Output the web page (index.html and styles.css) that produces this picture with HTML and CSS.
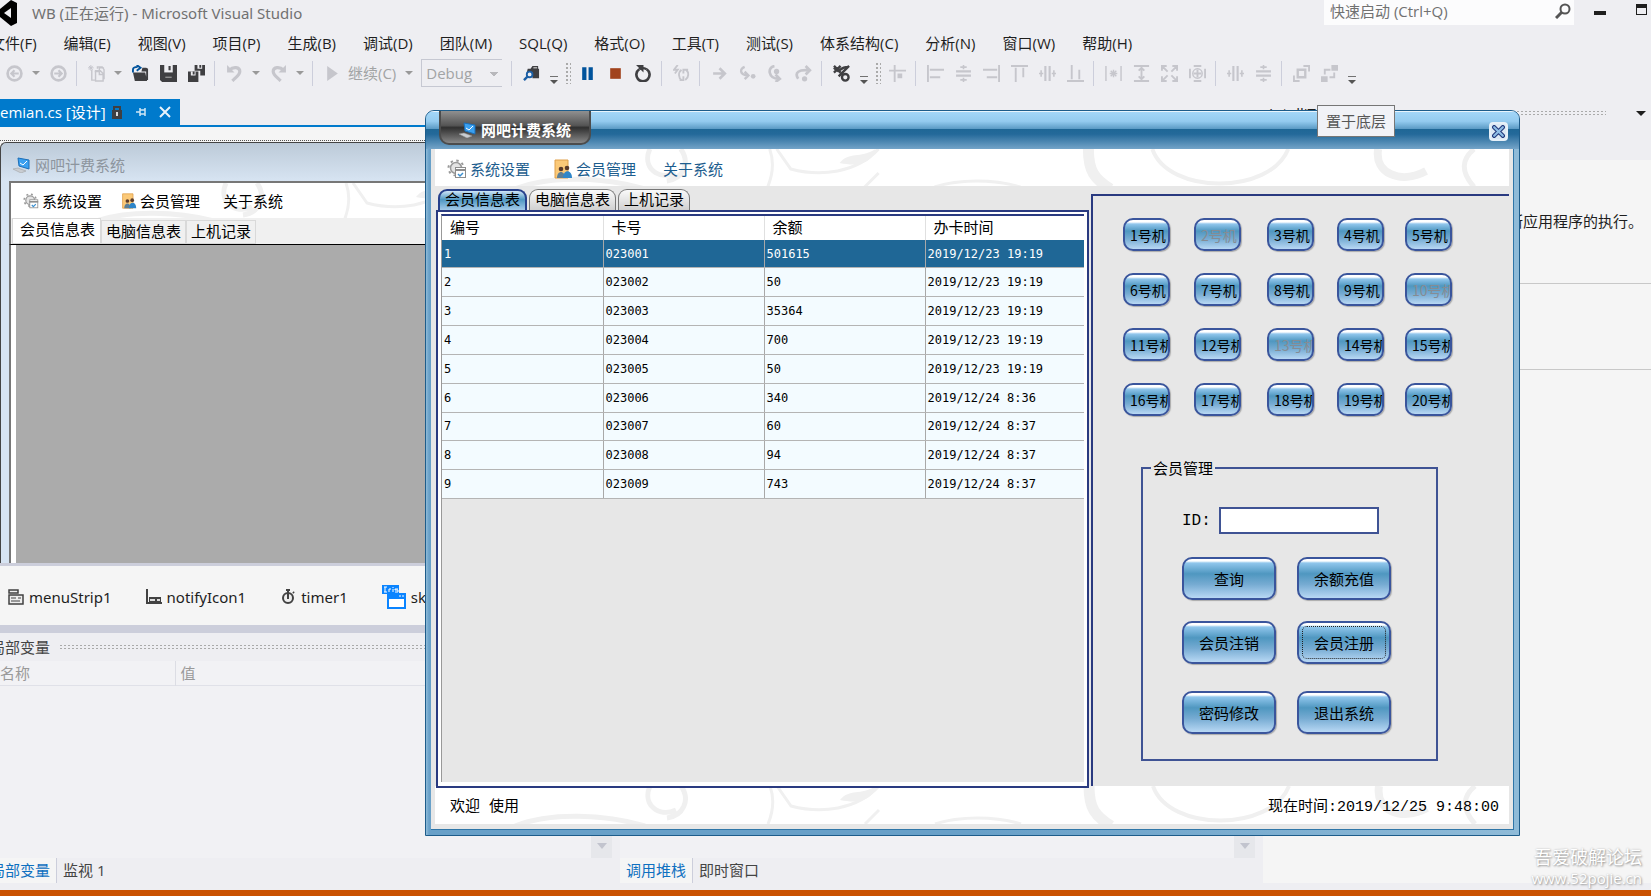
FILE: index.html
```html
<!DOCTYPE html>
<html lang="zh-CN">
<head>
    <meta charset="UTF-8">
    <meta name="viewport" content="width=device-width, initial-scale=1.0">
    <title>WB (正在运行) - Microsoft Visual Studio</title>
    <link rel="stylesheet" href="styles.css">
</head>
<body>
    <!-- shared icons -->
    <svg class="defs" aria-hidden="true">
        <symbol id="i-computer" viewBox="0 0 20 16">
            <path d="M6 1l11 2v9L7 9z" fill="#3aa0f0" stroke="#1c6fb8"/>
            <path d="M8 6l3 2 4-4" fill="none" stroke="#fff"/>
            <path d="M1 12l5-1 8 3-5 2z" fill="#c9cdd2" stroke="#999" stroke-width=".5"/>
        </symbol>
        <symbol id="i-gear" viewBox="0 0 20 20">
            <circle cx="9" cy="9" r="5.5" fill="#e4e4e4" stroke="#9a9a9a" stroke-width="1.5"/>
            <circle cx="9" cy="9" r="7.5" fill="none" stroke="#9a9a9a" stroke-width="2" stroke-dasharray="2.4 3.5"/>
            <rect x="8.500" y="8.500" width="10" height="10" fill="#fff" stroke="#8d8d8d"/>
            <path d="M8 11h11" stroke="#8d8d8d" stroke-width="2"/>
            <path d="M11 15l2 2 3-3" fill="none" stroke="#3a8fd0" stroke-width="1.5"/>
        </symbol>
        <symbol id="i-member" viewBox="0 0 18 20">
            <path d="M1 1h13v18H1z" fill="#fbc978" stroke="#e0a04b"/>
            <circle cx="7" cy="10" r="2.300" fill="#5a3b2b"/>
            <circle cx="13" cy="9" r="2.300" fill="#5a3b2b"/>
            <path d="M3 19c0-8 8-8 8 0z" fill="#5d7f96"/>
            <path d="M9 19c0-9 9-9 9 0z" fill="#2f86c9"/>
        </symbol>
        <symbol id="i-swirl" viewBox="0 0 1075 38" preserveAspectRatio="xMinYMin slice">
            <g fill="none" stroke="#f0f0f0" stroke-width="5">
                <path d="M215 0c-8 18 8 32 26 24M246 0c10 14 2 30-14 32M80 40c35-14 90-12 130 0" />
                <path d="M335 0c5 14 3 26-2 38M342 0l14 20c30 8 66 4 88-20M500 38c24-8 60-8 86 0M430 38l14-14" stroke-width="3"/>
                <path d="M654 0c0 22 6 30 22 40" stroke-width="11"/>
                <path d="M718 0c16 46 118 46 136 0" stroke-width="4"/>
                <path d="M944 0c-4 24 22 36 48 22" stroke-width="8"/>
                <path d="M1040 0c-12 10-14 22 0 38" stroke-width="5"/>
            </g>
            <path d="M405 14c10-12 20-4 36-14-4 14-16 18-36 14z" fill="#f0f0f0"/>
        </symbol>
        <symbol id="i-distribute-h" viewBox="0 0 16 16">
            <path d="M6 1v14M10 1v14" stroke="#c6c6cc" stroke-width="2"/>
            <path d="M2 5v6M14 5v6M0 8h4M12 8h4" stroke="#c6c6cc" stroke-width="1.500"/>
        </symbol>
        <symbol id="i-distribute-v" viewBox="0 0 16 16">
            <path d="M1 6h14M1 10h14" stroke="#c6c6cc" stroke-width="2"/>
            <path d="M5 2h6M5 14h6M8 0v4M8 12v4" stroke="#c6c6cc" stroke-width="1.500"/>
        </symbol>
    </svg>

    <header class="titlebar">
        <svg class="vs-logo" viewBox="0 0 18 26"><path d="M0 9L11 0l6 3v20l-6 3L0 17z" fill="#000"/><path d="M4 13l7-5v10z" fill="#eeeef2"/></svg>
        <span class="title">WB (正在运行) - Microsoft Visual Studio</span>
        <div class="quick">
            <input type="text" aria-label="快速启动" placeholder="快速启动 (Ctrl+Q)">
            <svg viewBox="0 0 16 16"><circle cx="10" cy="6" r="4.500" fill="none" stroke="#555" stroke-width="2"/><path d="M7 9l-6 6" stroke="#555" stroke-width="3"/></svg>
        </div>
        <button class="win-min" aria-label="最小化"></button>
        <button class="win-max" aria-label="最大化"></button>
    </header>

    <nav class="menubar">
        <a href="#">文件(F)</a><a href="#">编辑(E)</a><a href="#">视图(V)</a><a href="#">项目(P)</a><a href="#">生成(B)</a><a href="#">调试(D)</a><a href="#">团队(M)</a><a href="#">SQL(Q)</a><a href="#">格式(O)</a><a href="#">工具(T)</a><a href="#">测试(S)</a><a href="#">体系结构(C)</a><a href="#">分析(N)</a><a href="#">窗口(W)</a><a href="#">帮助(H)</a>
    </nav>

    <div class="toolbar">
        <button class="tool" aria-label="后退"><svg viewBox="0 0 16 16"><circle cx="8" cy="8" r="6.500" fill="none" stroke="#c6c6cc" stroke-width="2.500"/><path d="M12 8H5M8 5L5 8l3 3" fill="none" stroke="#c6c6cc" stroke-width="2"/></svg></button>
        <i class="caret"></i>
        <button class="tool" aria-label="前进"><svg viewBox="0 0 16 16"><circle cx="8" cy="8" r="6.500" fill="none" stroke="#c6c6cc" stroke-width="2.500"/><path d="M4 8h7M8 5l3 3-3 3" fill="none" stroke="#c6c6cc" stroke-width="2"/></svg></button>
        <i class="sep"></i>
        <button class="tool" aria-label="新建"><svg viewBox="0 0 18 18"><path d="M4 5v11h4M7 7h5V3h5v0M8 17V6h5l3 3v8zM12 6v4h4M10 4V2h5l2 3v10" fill="none" stroke="#c6c6cc" stroke-width="1.500"/><path d="M0 3h6M3 0v6M1 1l4 4M5 1L1 5" stroke="#c6c6cc"/></svg></button>
        <i class="caret"></i>
        <button class="tool" aria-label="打开"><svg viewBox="0 0 18 18"><path d="M1 8h13l2 9H3zM11 3h4l2 1v12h-2V7h-5z" fill="#3f3f42"/><path d="M1 8V5c0-2 2-3 5-3M5 0l4 3-4 3" fill="none" stroke="#00539c" stroke-width="2"/></svg></button>
        <button class="tool" aria-label="保存"><svg viewBox="0 0 16 16"><path d="M0 0h16v16H2l-2-2z" fill="#3f3f42"/><path d="M4 0h8v7H4z" fill="#eeeef2"/><path d="M8 1h2v4H8zM5 11h1v4H5z" fill="#3f3f42"/><path d="M5 11h6v1H5z" fill="#aaa"/></svg></button>
        <button class="tool" aria-label="全部保存"><svg viewBox="0 0 18 18"><path d="M7 0h11v11h-5V6H7zM0 7h11v11H0z" fill="#3f3f42"/><path d="M10 0h5v4h-5zM3 7h5v4H3z" fill="#eeeef2"/><path d="M12 0h2v3h-2zM5 7h2v3H5z" fill="#3f3f42"/></svg></button>
        <i class="sep"></i>
        <button class="tool" aria-label="撤消"><svg viewBox="0 0 16 16"><path d="M3 5c4-4 10-3 10 1 0 3-3 5-7 9" fill="none" stroke="#c6c6cc" stroke-width="3"/><path d="M1 0v7h7z" fill="#c6c6cc"/></svg></button>
        <i class="caret"></i>
        <button class="tool" aria-label="重做"><svg viewBox="0 0 16 16"><path d="M13 5C9 1 3 2 3 6c0 3 3 5 7 9" fill="none" stroke="#c6c6cc" stroke-width="3"/><path d="M15 0v7H8z" fill="#c6c6cc"/></svg></button>
        <i class="caret"></i>
        <i class="sep"></i>
        <button class="tool" aria-label="运行"><svg viewBox="0 0 16 16"><path d="M3 1l10 7-10 7z" fill="#c6c6cc"/></svg></button>
        <button class="continue">继续(C)</button>
        <i class="caret"></i>
        <select class="config" aria-label="解决方案配置"><option>Debug</option></select>
        <i class="sep"></i>
        <button class="tool" aria-label="查找"><svg viewBox="0 0 18 18"><path d="M5 4h3l2-3h6v3h1v10h-7V8H4z" fill="#3f3f42"/><path d="M11 3h4" stroke="#eee"/><circle cx="7" cy="10" r="3" fill="#eeeef2" stroke="#1b5fa6" stroke-width="2"/><path d="M5 12l-4 4" stroke="#1b5fa6" stroke-width="2.500"/></svg></button>
        <i class="more"></i>
        <i class="grip"></i>
        <button class="tool" aria-label="暂停"><svg viewBox="0 0 16 16"><path d="M3 2h4v12H3zM9 2h4v12H9z" fill="#00539c"/></svg></button>
        <button class="tool" aria-label="停止"><svg viewBox="0 0 16 16"><path d="M3 3h10v10H3z" fill="#a1421c"/></svg></button>
        <button class="tool" aria-label="重新启动"><svg viewBox="0 0 16 16"><path d="M4 4a6.200 6.200 0 1 0 7 0" fill="none" stroke="#3f3f42" stroke-width="2.500"/><path d="M1 0h7v7z" fill="#3f3f42"/><path d="M4 4c3-2 5-1 7 0" fill="none" stroke="#3f3f42" stroke-width="2"/></svg></button>
        <i class="sep"></i>
        <button class="tool" aria-label="应用代码更改"><svg viewBox="0 0 18 18"><path d="M5 0L1 5h4L2 9" fill="none" stroke="#c6c6cc" stroke-width="2"/><path d="M9 5c-4 3-3 9 0 11M7 16h4v-4M13 16c4-3 4-8 1-11M16 5h-5v4" fill="none" stroke="#c6c6cc" stroke-width="2"/></svg></button>
        <i class="sep"></i>
        <button class="tool" aria-label="显示下一语句"><svg viewBox="0 0 16 16"><path d="M2 8h10M8 3l5 5-5 5" fill="none" stroke="#c6c6cc" stroke-width="2.500"/></svg></button>
        <button class="tool" aria-label="逐语句"><svg viewBox="0 0 18 16"><path d="M6 1C1 3 0 9 9 10M6 6l4 4-4 4" fill="none" stroke="#c6c6cc" stroke-width="2.500"/><circle cx="15" cy="11" r="2.500" fill="#c6c6cc"/></svg></button>
        <button class="tool" aria-label="逐过程"><svg viewBox="0 0 16 16"><path d="M7 1C0 2 1 13 11 13M8 9l4 4-4 3" fill="none" stroke="#c6c6cc" stroke-width="2.500"/><circle cx="9" cy="6" r="2.500" fill="#c6c6cc"/></svg></button>
        <button class="tool" aria-label="跳出"><svg viewBox="0 0 16 16"><path d="M3 13C-1 7 4 4 13 5M10 1l4 4-4 4" fill="none" stroke="#c6c6cc" stroke-width="2.500"/><circle cx="9" cy="13" r="2.500" fill="#c6c6cc"/></svg></button>
        <i class="sep"></i>
        <button class="tool" aria-label="十六进制显示"><svg viewBox="0 0 18 18"><path d="M1 1l7 7M8 1L1 8M1 3c7 8 4-1 15-1M17 1L6 12" fill="none" stroke="#3f3f42" stroke-width="2.500"/><circle cx="13" cy="13" r="3.500" fill="none" stroke="#3f3f42" stroke-width="2.500"/></svg></button>
        <i class="more"></i>
        <i class="grip"></i>
        <button class="tool" aria-label="对齐到网格"><svg viewBox="0 0 18 18"><path d="M0 6h18M6 0v18" stroke="#c6c6cc" stroke-width="2"/><path d="M9 9h5v5H9z" fill="#c6c6cc"/></svg></button>
        <i class="sep"></i>
        <button class="tool" aria-label="左对齐"><svg viewBox="0 0 18 18"><path d="M1 0v18M3 5h15M3 13h11" stroke="#c6c6cc" stroke-width="2"/></svg></button>
        <button class="tool" aria-label="居中对齐"><svg><use href="#i-distribute-v"/></svg></button>
        <button class="tool" aria-label="右对齐"><svg viewBox="0 0 18 18"><path d="M17 0v18M0 5h15M4 13h11" stroke="#c6c6cc" stroke-width="2"/></svg></button>
        <button class="tool" aria-label="顶端对齐"><svg viewBox="0 0 18 18"><path d="M0 1h18M5 3v15M13 3v10" stroke="#c6c6cc" stroke-width="2"/></svg></button>
        <button class="tool" aria-label="中间对齐"><svg><use href="#i-distribute-h"/></svg></button>
        <button class="tool" aria-label="底端对齐"><svg viewBox="0 0 18 18"><path d="M0 17h18M5 0v15M13 5v10" stroke="#c6c6cc" stroke-width="2"/></svg></button>
        <i class="sep"></i>
        <button class="tool" aria-label="相同宽度"><svg viewBox="0 0 18 18"><path d="M1 1v16M17 1v16M5 9h8M9 5v8M6 6l6 6M12 6l-6 6" stroke="#c6c6cc" stroke-width="1.500"/></svg></button>
        <button class="tool" aria-label="相同高度"><svg viewBox="0 0 18 18"><path d="M1 1h16M1 17h16M9 3v12M6 6l3-3 3 3M6 12l3 3 3-3" fill="none" stroke="#c6c6cc" stroke-width="2"/></svg></button>
        <button class="tool" aria-label="相同大小"><svg viewBox="0 0 18 18"><path d="M1 6V1h5M12 1h5v5M17 12v5h-5M6 17H1v-5M2 2l5 5M16 2l-5 5M2 16l5-5M16 16l-5-5" fill="none" stroke="#c6c6cc" stroke-width="2"/></svg></button>
        <button class="tool" aria-label="按网格调整大小"><svg viewBox="0 0 18 18"><path d="M1 4v10M17 4v10M5 1h8M5 17h8M9 5v8M5 9h8" stroke="#c6c6cc" stroke-width="2"/><circle cx="9" cy="9" r="5" fill="none" stroke="#c6c6cc" stroke-width="1.500"/></svg></button>
        <i class="sep"></i>
        <button class="tool" aria-label="水平间距"><svg><use href="#i-distribute-h"/></svg></button>
        <button class="tool" aria-label="垂直间距"><svg><use href="#i-distribute-v"/></svg></button>
        <i class="sep"></i>
        <button class="tool" aria-label="置于顶层"><svg viewBox="0 0 18 18"><path d="M5 5h8v8H5z" fill="none" stroke="#c6c6cc" stroke-width="2.500"/><path d="M11 1h6v6M1 11v6h6" fill="none" stroke="#c6c6cc" stroke-width="2"/></svg></button>
        <button class="tool" aria-label="置于底层"><svg viewBox="0 0 18 18"><path d="M11 0h7v6h-7zM0 12h7v6H0z" fill="#c6c6cc"/><path d="M4 10V5h6M14 8v5H9" fill="none" stroke="#c6c6cc" stroke-width="2"/></svg></button>
        <i class="more"></i>
    </div>

    <main class="workspace">
        <div class="left">
            <div class="doc-tabs">
                <div class="doc-tab">
                    <span>emian.cs [设计]</span>
                    <svg viewBox="0 0 12 14"><path d="M3 6V2h6v4" fill="none" stroke="#3f3f42" stroke-width="2"/><path d="M1 5h10v9H1z" fill="#3f3f42"/><path d="M5 7h2v4H5z" fill="#ddd"/></svg>
                    <svg viewBox="0 0 12 14"><path d="M1 7h4M5 3v8M5 5h5v4H5M10 3v8" fill="none" stroke="#d0e6f5" stroke-width="1.500"/></svg>
                    <svg viewBox="0 0 12 14"><path d="M1 2l10 10M11 2L1 12" stroke="#e8f3fb" stroke-width="2"/></svg>
                </div>
            </div>
            <div class="designer">
                <div class="form-frame">
                    <div class="form-title"><svg><use href="#i-computer"/></svg>网吧计费系统</div>
                    <div class="form-body">
                        <div class="form-menu">
                            <svg class="swirl"><use href="#i-swirl"/></svg>
                            <a href="#"><svg><use href="#i-gear"/></svg>系统设置</a>
                            <a href="#"><svg><use href="#i-member"/></svg>会员管理</a>
                            <a href="#">关于系统</a>
                        </div>
                        <div class="form-tabs"><button class="on">会员信息表</button><button>电脑信息表</button><button>上机记录</button></div>
                        <div class="form-grid"></div>
                    </div>
                </div>
            </div>
            <div class="tray">
                <span><svg viewBox="0 0 16 16"><path d="M1 1h9v3H1zM1 6h14v9H1z" fill="#eee" stroke="#424242" stroke-width="1.500"/><path d="M3 9h5M3 12h9M10 9h3" stroke="#424242"/></svg>menuStrip1</span>
                <span><svg viewBox="0 0 16 16"><path d="M1 0v14h15" fill="none" stroke="#424242" stroke-width="2"/><path d="M3 8h12v5H3z" fill="#424242"/><path d="M4 10h5v2H4zM11 10h3v2h-3z" fill="#ddd"/></svg>notifyIcon1</span>
                <span><svg viewBox="0 0 16 16"><circle cx="8" cy="9" r="5" fill="#eee" stroke="#424242" stroke-width="2"/><path d="M6 1h4M8 1v9M13 3l1 1" stroke="#424242" stroke-width="2"/></svg>timer1</span>
                <span class="skin"><svg viewBox="0 0 24 24"><path d="M0 0h17v9H0zM5 8h19v16H5z" fill="#0a84ff"/><path d="M7 14h15v8H7z" fill="#fff"/><path d="M17 11h2M20 11h2M2 2h3M3 2v5M2 7h3M7 7V4h2M11 4v3M11 2v1M16 4h-3v1h3v2h-3" fill="none" stroke="#fff"/></svg>skinEngine1</span>
            </div>
            <div class="panes">
                <section class="pane locals">
                    <h2><span>局部变量</span><i class="dots"></i></h2>
                    <table class="vars"><tr><th>名称</th><th>值</th></tr></table>
                    <div class="pane-body"><i class="scroll-down"></i></div>
                    <div class="pane-tabs"><button class="on">局部变量</button><button>监视 1</button></div>
                </section>
                <section class="pane stack">
                    <div class="pane-body"><i class="scroll-down"></i></div>
                    <div class="pane-tabs"><button class="on">调用堆栈</button><button>即时窗口</button></div>
                </section>
            </div>
        </div>
        <aside class="right">
            <h2><span>IntelliTrace</span><i class="dots"></i><i class="drop"></i></h2>
            <p>中断应用程序的执行。</p>
            <div class="rule"></div>
            <div class="rule"></div>
        </aside>
    </main>
    <footer class="ide-status"></footer>

    <!-- running program -->
    <div class="app">
        <div class="app-title">
            <div class="app-name"><svg><use href="#i-computer"/></svg>网吧计费系统</div>
            <button class="app-close" aria-label="关闭"><svg viewBox="0 0 12 12"><path d="M2 2l8 8M10 2l-8 8" stroke="#22397c" stroke-width="4" stroke-linecap="round"/><path d="M2 2l8 8M10 2l-8 8" stroke="#8fbfe6" stroke-width="2" stroke-linecap="round"/></svg></button>
        </div>
        <div class="app-body">
            <nav class="app-menu">
                <svg class="swirl"><use href="#i-swirl"/></svg>
                <a href="#"><svg><use href="#i-gear"/></svg>系统设置</a>
                <a href="#"><svg><use href="#i-member"/></svg>会员管理</a>
                <a href="#">关于系统</a>
            </nav>
            <div class="app-main">
                <div class="records">
                    <div class="app-tabs"><button class="on">会员信息表</button><button>电脑信息表</button><button>上机记录</button></div>
                    <div class="grid-box">
                        <div class="grid-inner">
                        <table class="grid">
                            <colgroup><col class="c1"><col class="c1"><col class="c1"><col></colgroup>
                            <thead><tr><th>编号</th><th>卡号</th><th>余额</th><th>办卡时间</th></tr></thead>
                            <tbody>
                                <tr class="sel"><td>1</td><td>023001</td><td>501615</td><td>2019/12/23 19:19</td></tr>
                                <tr><td>2</td><td>023002</td><td>50</td><td>2019/12/23 19:19</td></tr>
                                <tr><td>3</td><td>023003</td><td>35364</td><td>2019/12/23 19:19</td></tr>
                                <tr><td>4</td><td>023004</td><td>700</td><td>2019/12/23 19:19</td></tr>
                                <tr><td>5</td><td>023005</td><td>50</td><td>2019/12/23 19:19</td></tr>
                                <tr><td>6</td><td>023006</td><td>340</td><td>2019/12/24 8:36</td></tr>
                                <tr><td>7</td><td>023007</td><td>60</td><td>2019/12/24 8:37</td></tr>
                                <tr><td>8</td><td>023008</td><td>94</td><td>2019/12/24 8:37</td></tr>
                                <tr><td>9</td><td>023009</td><td>743</td><td>2019/12/24 8:37</td></tr>
                            </tbody>
                        </table>
                        </div>
                    </div>
                </div>
                <div class="machines">
                    <div class="pc-grid">
                        <button>1号机</button><button disabled>2号机</button><button>3号机</button><button>4号机</button><button>5号机</button>
                        <button>6号机</button><button>7号机</button><button>8号机</button><button>9号机</button><button disabled>10号机</button>
                        <button>11号机</button><button>12号机</button><button disabled>13号机</button><button>14号机</button><button>15号机</button>
                        <button>16号机</button><button>17号机</button><button>18号机</button><button>19号机</button><button>20号机</button>
                    </div>
                    <fieldset>
                        <legend>会员管理</legend>
                        <div class="id-row"><label for="member-id">ID:</label><input type="text" id="member-id"></div>
                        <div class="actions">
                            <button>查询</button><button>余额充值</button>
                            <button>会员注销</button><button class="focused">会员注册</button>
                            <button>密码修改</button><button>退出系统</button>
                        </div>
                    </fieldset>
                </div>
            </div>
            <div class="app-status">
                <svg class="swirl"><use href="#i-swirl"/></svg>
                <span>欢迎 使用</span>
                <span>现在时间:2019/12/25 9:48:00</span>
            </div>
        </div>
    </div>

    <div class="tooltip">置于底层</div>
    <div class="watermark">吾爱破解论坛<br><span>www.52pojie.cn</span></div>
</body>
</html>
```
FILE: styles.css
```css
* {
    box-sizing: border-box;
}

body {
    margin: 0;
    height: 100vh;
    display: flex;
    flex-direction: column;
    position: relative;
    overflow: hidden;
    background: #eeeef2;
    color: #1e1e1e;
    font-family: "Open Sans", "Noto Sans CJK SC", sans-serif;
    font-size: 15px;
    line-height: 20px;
}

button, input, select {
    font: inherit;
    color: inherit;
    margin: 0;
    padding: 0;
    border: 0;
    background: none;
}

a {
    color: inherit;
    text-decoration: none;
}

h2 {
    margin: 0;
    font-size: 15px;
    font-weight: normal;
}

svg {
    flex: none;
}

.defs {
    position: absolute;
    width: 0;
    height: 0;
}

/* title bar */
.titlebar {
    flex: none;
    height: 28px;
    display: flex;
    align-items: flex-start;
}

.vs-logo {
    width: 18px;
    height: 26px;
}

.title {
    margin-left: 14px;
    line-height: 27px;
    color: #717171;
    font-family: "Noto Sans", "Noto Sans CJK SC", sans-serif;
}

.quick {
    margin-left: auto;
    width: 250px;
    height: 25px;
    background: #fcfcfd;
    display: flex;
    align-items: center;
    padding: 0 3px 3px 6px;
}

.quick input {
    flex: 1;
    min-width: 0;
}

.quick input::placeholder {
    color: #717171;
    opacity: 1;
}

.quick svg {
    width: 16px;
    height: 16px;
}

.win-min {
    width: 12px;
    height: 4px;
    margin: 11px 0 0 20px;
    background: #1e1e1e;
}

.win-max {
    width: 11px;
    height: 11px;
    margin: 4px 4px 0 30px;
    border: 1px solid #1e1e1e;
    border-top-width: 4px;
}

/* menu */
.menubar {
    flex: none;
    height: 30px;
    display: flex;
    align-items: center;
    gap: 27px;
    margin-left: -10px;
    white-space: nowrap;
}

/* toolbar */
.toolbar {
    flex: none;
    height: 30px;
    display: flex;
    align-items: center;
}

.tool {
    width: 28px;
    height: 28px;
    flex: none;
    display: flex;
    align-items: center;
    justify-content: center;
}

.tool svg {
    width: 17px;
    height: 17px;
}

.caret {
    width: 16px;
    flex: none;
    display: flex;
    justify-content: center;
}

.caret::before {
    content: "";
    border: 4px solid transparent;
    border-top-color: #999;
    border-bottom: 0;
}

.sep {
    width: 1px;
    height: 25px;
    margin: 0 5px 0 4px;
    flex: none;
    background: #cccedb;
}

.more {
    width: 18px;
    flex: none;
    display: flex;
    flex-direction: column;
    align-items: center;
    gap: 3px;
    padding-top: 14px;
}

.more::before {
    content: "";
    width: 8px;
    height: 1px;
    background: #717171;
}

.more::after {
    content: "";
    border: 4px solid transparent;
    border-top-color: #555;
    border-bottom: 0;
}

.grip {
    width: 6px;
    height: 22px;
    margin: 0 2px;
    flex: none;
    background: radial-gradient(circle, #aaa 1px, transparent 1px) 0 0 / 4px 4px;
}

.continue {
    margin-left: 2px;
    padding-right: 5px;
    color: #a2a4a5;
    white-space: nowrap;
}

.config {
    width: 81px;
    height: 28px;
    margin: 0 5px 0 4px;
    padding: 0 4px;
    appearance: none;
    border: 1px solid #c6c8d2;
    border-right: 0;
    color: #a2a4a5;
    background: linear-gradient(45deg, transparent 50%, #b8b8bc 50%) 68px 12px / 4px 4px no-repeat, linear-gradient(-45deg, transparent 50%, #b8b8bc 50%) 72px 12px / 4px 4px no-repeat;
}

/* workspace */
.workspace {
    flex: 1;
    min-height: 0;
    display: flex;
    gap: 8px;
    padding: 11px 0 7px;
}

.left {
    flex: 1;
    min-width: 0;
    display: flex;
    flex-direction: column;
}

.doc-tabs {
    flex: none;
    height: 28px;
    border-bottom: 2px solid #007acc;
}

.doc-tab {
    width: 180px;
    height: 26px;
    display: flex;
    align-items: center;
    gap: 12px;
    background: #007acc;
    color: #fff;
    line-height: 26px;
    white-space: nowrap;
}

.doc-tab span {
    width: 99px;
}

.doc-tab svg {
    width: 12px;
    height: 14px;
}

.designer {
    flex: 1;
    min-height: 0;
    padding-top: 13px;
    background: #f5f5f5;
}

.form-frame {
    height: 100%;
    display: flex;
    flex-direction: column;
    border-top: 1px dotted #555;
}

.form-title {
    flex: none;
    height: 39px;
    margin-top: 1px;
    display: flex;
    align-items: center;
    gap: 3px;
    padding: 5px 0 0 11px;
    border: 1px solid #444;
    border-width: 1px 0 0 1px;
    border-radius: 6px 0 0 0;
    background: linear-gradient(#bccad8, #d7e4f2);
    color: #8d959e;
}

.form-title svg {
    width: 20px;
    height: 16px;
}

.form-body {
    flex: 1;
    min-height: 0;
    display: flex;
    flex-direction: column;
    border-left: 1px solid #444;
    padding-left: 8px;
    background: #d7e4f2;
}

.form-menu {
    position: relative;
    flex: none;
    height: 37px;
    display: flex;
    align-items: center;
    padding-left: 12px;
    background: #fff;
    border-left: 2px solid #777;
    border-top: 2px solid #777;
    color: #000;
}

.form-menu a, .app-menu a {
    position: relative;
    display: flex;
    align-items: center;
    gap: 3px;
    margin-right: 19px;
}

.form-menu a:last-child, .app-menu a:last-child {
    padding-left: 4px;
}

.form-menu a svg {
    width: 16px;
    height: 16px;
}

.swirl {
    position: absolute;
    inset: 0;
    width: 100%;
    height: 100%;
}

.form-menu .swirl {
    width: 1075px;
}

.form-tabs {
    flex: none;
    height: 26px;
    display: flex;
    align-items: flex-end;
    padding-left: 1px;
    background: #f0f0f0;
    border-left: 2px solid #777;
    color: #000;
}

.form-tabs button {
    height: 24px;
    padding: 0 4px 2px;
    border: 1px solid #d9d9d9;
    background: #f0f0f0;
}

.form-tabs .on {
    height: 26px;
    padding: 0 5px 4px 7px;
    background: #fff;
}

.form-grid {
    flex: 1;
    border-left: 2px solid #777;
    border-top: 1px solid #000;
    background: linear-gradient(90deg, #fff 5px, #ababab 5px);
}

/* component tray */
.tray {
    flex: none;
    height: 70px;
    display: flex;
    align-items: center;
    gap: 34px;
    padding: 2px 0 0 8px;
    border-top: 3px solid #cccedb;
    border-bottom: 8px solid #cccedb;
    background: #f5f5f5;
    font-family: "Noto Sans", sans-serif;
}

.tray span {
    display: flex;
    align-items: center;
    gap: 5px;
}

.tray span svg {
    width: 16px;
    height: 16px;
}

.tray .skin svg {
    width: 24px;
    height: 24px;
}

/* bottom panes */
.panes {
    flex: none;
    height: 250px;
    display: flex;
    gap: 8px;
}

.pane {
    flex: 1;
    display: flex;
    flex-direction: column;
    white-space: nowrap;
}

.locals {
    flex: 0 0 612px;
}

.pane h2 {
    height: 28px;
    display: flex;
    align-items: center;
    gap: 9px;
    color: #444;
}

.pane h2 span {
    margin-left: -10px;
}

.dots {
    flex: 1;
    height: 6px;
    background: radial-gradient(circle, #aaa 1px, transparent 1px) 0 0 / 4px 3px;
}

.vars {
    width: 100%;
    height: 25px;
    border-collapse: collapse;
    border-bottom: 1px solid #e0e1e8;
    background: #f2f2f5;
}

.vars th {
    padding: 0 0 0 5px;
    text-align: left;
    font-weight: normal;
    color: #999;
}

.vars th:first-child {
    width: 175px;
    padding: 0;
    border-right: 1px solid #dcdde4;
}

.pane-body {
    flex: 1;
    display: flex;
    justify-content: flex-end;
    align-items: flex-end;
    background: #f1f1f4;
}

.scroll-down {
    width: 21px;
    height: 24px;
    display: flex;
    justify-content: center;
    align-items: center;
    background: #e6e7eb;
}

.scroll-down::before {
    content: "";
    border: 5px solid transparent;
    border-top: 6px solid #c2c4ce;
    border-bottom: 0;
}

.pane-tabs {
    flex: none;
    height: 25px;
    display: flex;
}

.pane-tabs button {
    padding: 0 6px 2px;
    color: #444;
}

.pane-tabs .on {
    color: #0e70c0;
    background: #f5f5f5;
    border-right: 1px solid #cccedb;
}

.locals .on {
    margin-left: -16px;
}

/* right dock */
.right {
    flex: 0 0 388px;
    background: #f5f5f5;
}

.right h2 {
    height: 61px;
    display: flex;
    align-items: flex-start;
    gap: 10px;
    padding: 4px 5px 0 6px;
    background: #eeeef2;
}

.right h2 .dots {
    margin: 7px 0 0;
}

.drop {
    margin: 8px 0 0 20px;
    border: 5px solid transparent;
    border-top-color: #1e1e1e;
    border-bottom: 0;
}

.right p {
    margin: 0;
    padding: 51px 8px 0;
    height: 123px;
    text-align: right;
}

.rule {
    height: 86px;
    border-top: 1px solid #c8c8c8;
}

.ide-status {
    flex: none;
    height: 6px;
    background: #ca5100;
}

/* running window */
.app {
    position: absolute;
    left: 425px;
    right: 131px;
    top: 110px;
    bottom: 60px;
    display: flex;
    flex-direction: column;
    border: 1px solid #1d5c8a;
    border-radius: 9px 9px 0 0;
    background: linear-gradient(90deg, #8fbbd8, #68a0c8 3px, #68a0c8 50%, #8fbbd8);
    color: #000;
    overflow: hidden;
}

.app-title {
    flex: none;
    height: 38px;
    display: flex;
    justify-content: space-between;
    align-items: flex-start;
    padding: 0 11px 0 13px;
    border-top: 1px solid #e8f4fc;
    background: linear-gradient(#a3d6f8, #94cbef 25%, #5c9cc6 45%, #1f6796 47%, #24699a 60%, #74a4c8);
}

.app-name {
    height: 34px;
    width: 152px;
    margin-top: -1px;
    display: flex;
    align-items: center;
    gap: 3px;
    padding: 6px 0 0 17px;
    border: 2px solid #4c4c4c;
    border-top: 0;
    border-radius: 0 0 10px 10px;
    background: linear-gradient(#909090, #555 45%, #303030 52%, #888);
    color: #fff;
    font-weight: bold;
    white-space: nowrap;
}

.app-name svg {
    width: 20px;
    height: 16px;
}

.app-close {
    width: 19px;
    height: 19px;
    margin-top: 10px;
    display: flex;
    align-items: center;
    justify-content: center;
    border: 2px solid #e6f0f8;
    border-radius: 4px;
    background: #dce9f4;
}

.app-close svg {
    width: 13px;
    height: 13px;
}

.app-body {
    flex: 1;
    min-height: 0;
    margin: 0 5px 5px;
    padding: 0 4px 5px;
    display: flex;
    flex-direction: column;
    background: #e7e7e7;
    border-right: 1px solid #2f76a8;
    border-bottom: 1px solid #2f76a8;
}

.app-menu {
    position: relative;
    flex: none;
    height: 37px;
    display: flex;
    align-items: center;
    padding: 3px 0 0 12px;
    background: #fff;
    color: #1c5d8e;
}

.app-menu a {
    margin-right: 23px;
}

.app-menu a svg {
    width: 20px;
    height: 20px;
}

.app-main {
    flex: 1;
    min-height: 0;
    display: flex;
    gap: 2px;
}

/* the list box reaches over the top edge of the status strip */
.records {
    position: relative;
    z-index: 1;
    width: 653px;
    margin: 0 0 -2px 1px;
    display: flex;
    flex-direction: column;
}

.app-tabs {
    flex: none;
    height: 24px;
    display: flex;
    align-items: flex-end;
    gap: 2px;
    padding-left: 2px;
}

.app-tabs button {
    height: 21px;
    padding: 0 5px 2px;
    line-height: 17px;
    border: 1px solid #777;
    border-bottom: 0;
    border-radius: 9px 9px 0 0;
    background: linear-gradient(#fafafa, #d0d0d0);
}

.app-tabs .on {
    border: 2px solid #27408b;
    border-bottom: 0;
    background: linear-gradient(#cfe6f8, #4f97c2 45%, #a4cbea);
}

.grid-box {
    flex: 1;
    min-height: 0;
    padding: 2px 3px 4px;
    border: 2px solid #2a3a80;
    background: #fff;
}

.grid-inner {
    height: 100%;
    border-top: 2px solid #2a3a80;
    border-left: 1px solid #999;
    background: #e7e7e7;
}

.grid {
    width: 100%;
    height: 283px;
    table-layout: fixed;
    border-collapse: collapse;
    font-family: "DejaVu Sans Mono", "Noto Sans CJK SC", monospace;
    font-size: 12px;
}

.c1 {
    width: 161px;
}

.grid th {
    height: 24px;
    padding: 0 8px 3px;
    text-align: left;
    font: 15px/20px "Noto Sans CJK SC", sans-serif;
    background: #fff;
    border-right: 1px solid #e0e0e0;
}

.grid td {
    padding: 0 2px;
    line-height: 16px;
    background: #f3fbff;
    border-right: 1px solid #a8a8a8;
    border-bottom: 1px solid #b4b4b4;
}

.grid th:last-child, .grid td:last-child {
    border-right: 0;
}

.grid .sel td {
    background: #1f6796;
    color: #fff;
}

.machines {
    flex: 1;
    margin-top: 8px;
    padding: 22px 0 0 30px;
    border-top: 2px solid #2a3a80;
    border-left: 2px solid #2a3a80;
}

.pc-grid {
    display: grid;
    grid-template-columns: 71px 73px 70px 68px 47px;
    grid-auto-rows: 33px;
    row-gap: 22px;
}

.pc-grid button, .actions button {
    border: 2px solid #3a559c;
    border-radius: 10px;
    background: linear-gradient(#fff 2px, #90c6ec 4px, #4f97c0 38%, #76abd2 65%, #b8d8f4);
    box-shadow: 1px 1px 1px #aaa;
    white-space: nowrap;
    font-family: "Noto Sans CJK SC", sans-serif;
}

.pc-grid button {
    width: 47px;
    padding-left: 5px;
    text-align: left;
    overflow: hidden;
    font-size: 14px;
}

.pc-grid button:disabled {
    color: #858c94;
}

fieldset {
    width: 297px;
    height: 302px;
    margin: 43px 0 0 18px;
    padding: 0 0 0 39px;
    border: 2px solid #3f5394;
}

legend {
    margin-left: -31px;
    padding: 0 2px;
    line-height: 18px;
}

.id-row {
    display: flex;
    align-items: center;
    gap: 8px;
    margin-top: 30px;
}

.id-row label {
    font: 16px/20px "Liberation Mono", monospace;
}

.id-row input {
    width: 160px;
    height: 27px;
    padding: 0 4px;
    border: 2px solid #3f5394;
    background: #fff;
}

.actions {
    display: grid;
    grid-template-columns: 115px 94px;
    grid-template-rows: 64px 70px 43px;
    margin-top: 23px;
}

.actions button {
    width: 94px;
    height: 43px;
}

.actions .focused {
    outline: 1px dotted #222;
    outline-offset: -6px;
}

.app-status {
    position: relative;
    flex: none;
    height: 38px;
    display: flex;
    align-items: center;
    justify-content: space-between;
    padding: 6px 10px 0 15px;
    background: #fff;
    font-family: "Liberation Mono", "Noto Sans CJK SC", monospace;
}

.app-status span {
    position: relative;
}

.tooltip {
    position: absolute;
    left: 1317px;
    top: 105px;
    padding: 5px 8px;
    border: 1px solid #767676;
    background: #f1f2f7;
    color: #575757;
}

.watermark {
    position: absolute;
    right: 9px;
    bottom: 8px;
    color: #fff;
    font-size: 18px;
    text-align: right;
    text-shadow: 1px 1px 2px #999, 0 0 2px #bbb;
}

.watermark span {
    font-size: 15px;
}
```
